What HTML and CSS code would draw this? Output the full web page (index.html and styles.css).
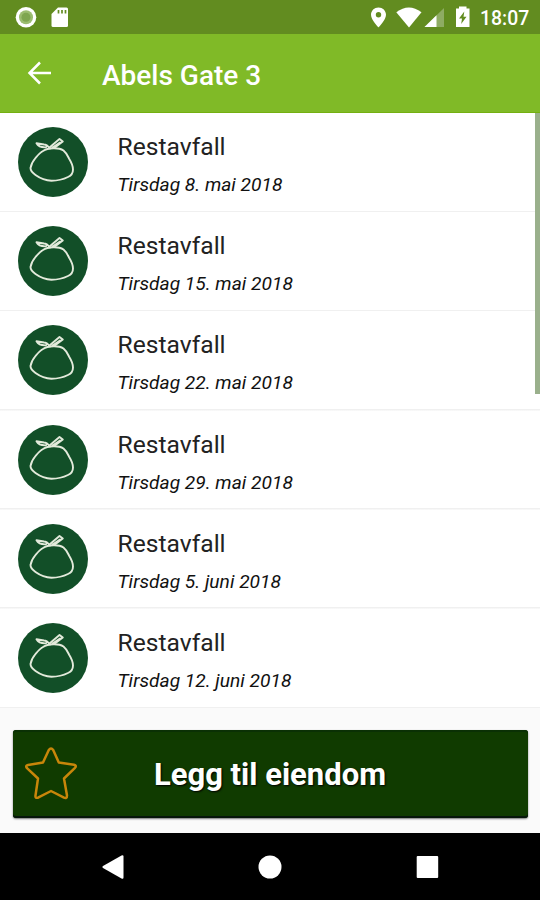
FILE: index.html
```html
<!DOCTYPE html>
<html lang="no">
<head>
<meta charset="utf-8">
<title>Abels Gate 3</title>
<link rel="stylesheet" href="styles.css">
</head>
<body>
<!-- waste bag, used by every row -->
<svg class="defs">
	<symbol id="bag" viewBox="0 0 70 70">
		<circle cx="35" cy="35" r="35" fill="#124f28"/>
		<g fill="none" stroke="#e3eadb" stroke-width="1.9" stroke-linejoin="round" stroke-linecap="round">
			<path d="M25 24C30 20.500 41 20.500 45.500 23.500C48.500 26 49.500 28.500 51 31.500C53.500 35.500 55 39 55 42.500C55 46.500 53.500 48.500 50 50C45 52.500 39 53.700 33.500 53.700C27 53.500 21 50.500 17.500 48C14 45.500 12.500 44 12.500 41C13 37.500 15 34 17.500 31C20 28 22 25.500 25 24Z"/>
			<path d="M32 21.500C30 19 28 17.500 26 17.500L18.500 16.300C20 19 24 20.500 28 20.300"/>
			<path d="M31.500 20.500L41.500 12L44.800 14.500L36.500 20.800M34.500 20.500L42 15.500"/>
		</g>
	</symbol>
</svg>
<div class="screen">
	<div class="status">
		<svg class="notifications" width="60" height="34" viewBox="0 0 60 34">
			<circle cx="16" cy="17.300" r="10.300" fill="#fff"/>
			<circle cx="16" cy="17.300" r="7" fill="#9bbd70"/>
			<circle cx="16" cy="17.300" r="4.500" fill="#7ea650"/>
			<path d="M48 7.500H56.500Q58 7.500 58 9V25.500Q58 27 56.500 27H43Q41.500 27 41.500 25.500V14Z" fill="#fff"/>
			<path d="M48.500 10v3.500M52 10v3.500M55.500 10v3.500" stroke="#628c20" stroke-width="1.700"/>
		</svg>
		<svg class="system" width="102" height="34" viewBox="0 0 102 34">
			<path fill="#fff" fill-rule="evenodd" d="M8.500 7.500C4.300 7.500 1 10.700 1 14.800C1 20 8.500 27.500 8.500 27.500S16 20 16 14.800C16 10.700 12.700 7.500 8.500 7.500ZM8.500 12A2.700 2.700 0 1 1 8.500 17.400A2.700 2.700 0 1 1 8.500 12Z"/>
			<path fill="#fff" d="M26.300 12.300Q38.800 2.800 51.500 12.300L39 27.500Z"/>
			<path fill="#8eac63" d="M74 8V27H54.500Z"/>
			<path fill="#fff" d="M66.500 15.300V27H54.500Z"/>
			<path fill="#fff" d="M89 8.500V6.500H96.500V8.500H99.500V27H86V8.500Z"/>
			<path fill="#628c20" d="M94.300 11.500L89 18.500H92L91.200 24L96.500 16.700H93.500Z"/>
		</svg>
		<span class="clock">18:07</span>
	</div>
	<div class="toolbar">
		<svg class="back" width="26" height="24" viewBox="0 0 26 24">
			<path d="M24 12H2.500M13 1.500L2.500 12L13 22.500" fill="none" stroke="#fff" stroke-width="2.500"/>
		</svg>
		<h1 class="title">Abels Gate 3</h1>
	</div>
	<div class="list">
		<div class="row">
			<svg class="icon"><use href="#bag"/></svg>
			<div class="text"><div class="name">Restavfall</div><div class="date">Tirsdag 8. mai 2018</div></div>
		</div>
		<div class="row">
			<svg class="icon"><use href="#bag"/></svg>
			<div class="text"><div class="name">Restavfall</div><div class="date">Tirsdag 15. mai 2018</div></div>
		</div>
		<div class="row">
			<svg class="icon"><use href="#bag"/></svg>
			<div class="text"><div class="name">Restavfall</div><div class="date">Tirsdag 22. mai 2018</div></div>
		</div>
		<div class="row">
			<svg class="icon"><use href="#bag"/></svg>
			<div class="text"><div class="name">Restavfall</div><div class="date">Tirsdag 29. mai 2018</div></div>
		</div>
		<div class="row">
			<svg class="icon"><use href="#bag"/></svg>
			<div class="text"><div class="name">Restavfall</div><div class="date">Tirsdag 5. juni 2018</div></div>
		</div>
		<div class="row">
			<svg class="icon"><use href="#bag"/></svg>
			<div class="text"><div class="name">Restavfall</div><div class="date">Tirsdag 12. juni 2018</div></div>
		</div>
		<div class="scrollbar"></div>
	</div>
	<div class="footer">
		<button class="add">
			<svg class="star" width="54" height="54" viewBox="0 0 54 54">
				<path d="M24.800 4Q27 .8 29.200 4L34.800 16.500L50 18.700Q53 19.500 51 21.800L40 32.500L43 49.500Q43 53 40 51.700L27 45L14 51.700Q11 52.500 11.500 49.500L14 32.500L3 22.200Q1 19.700 4 19L19 16.500Z" fill="none" stroke="#c8860a" stroke-width="2.500" stroke-linejoin="round"/>
			</svg>
			<span class="label">Legg til eiendom</span>
		</button>
	</div>
	<div class="navbar">
		<svg width="24" height="26" viewBox="0 0 24 26"><path d="M20.500 1.500Q22.500 .5 22.500 2.500V23.500Q22.500 25.500 20.500 24.500L2 14Q.5 13 2 12Z" fill="#fff"/></svg>
		<svg width="24" height="26" viewBox="0 0 24 26"><circle cx="12" cy="13" r="11.500" fill="#fff"/></svg>
		<svg width="24" height="26" viewBox="0 0 24 26"><rect x="1.700" y="2" width="21.500" height="22" rx="1" fill="#fff"/></svg>
	</div>
</div>
</body>
</html>
```
FILE: styles.css
```css
body{
	margin:0;
	font-family:Roboto, "Liberation Sans", sans-serif;
	background:#fafafa;
}
.defs{
	display:none;
}
.screen{
	display:flex;
	flex-direction:column;
	width:540px;
	height:900px;
	overflow:hidden;
}
.status{
	display:flex;
	align-items:center;
	height:34px;
	box-sizing:border-box;
	padding:0 11px 0 10px;
	background:#628c20;
}
.system{
	margin-left:auto;
	margin-right:8px;
}
.clock{
	width:49px;
	color:#fff;
	font-size:19.4px;
	font-weight:500;
	line-height:34px;
	padding-top:3px;
	white-space:nowrap;
}
.toolbar{
	display:flex;
	align-items:center;
	height:79px;
	box-sizing:border-box;
	padding:0 0 0 27px;
	background:#80ba27;
	border-bottom:1px solid #74b010;
}
.back{
	margin-right:49px;
}
.title{
	margin:5px 0 0;
	color:#fff;
	font-size:28px;
	font-weight:500;
	line-height:32px;
}
.list{
	position:relative;
	background:#fff;
}
.row{
	display:flex;
	height:99.2px;
	box-sizing:border-box;
	padding:14px 0 0 17.5px;
	background:linear-gradient(#f0f0f0, #f0f0f0) 0 100% / 100% 1.5px no-repeat;
}
.icon{
	width:70px;
	height:70px;
	margin-right:30px;
}
.name{
	margin-top:4px;
	color:#222;
	font-size:24.6px;
	line-height:31px;
}
.date{
	margin-top:10px;
	color:#111;
	font-size:19.2px;
	font-style:italic;
	line-height:25px;
}
/* lies over the rows */
.scrollbar{
	position:absolute;
	top:0;
	right:0;
	width:5px;
	height:281px;
	background:#9ab08c;
}
.footer{
	flex:1;
	padding:22px 12px 0 13px;
}
.add{
	display:flex;
	align-items:center;
	width:100%;
	height:88px;
	padding:0 66px 0 11px;
	border:0;
	border-radius:3px;
	background:#103b00;
	box-shadow:inset 0 2px 0 #0a3004, inset 0 -2px 0 #06160a, 0 1px 2px #777;
	font-family:inherit;
}
.star{
	flex:none;
	margin-bottom:3px;
}
.label{
	flex:1;
	padding-top:2px;
	color:#fff;
	font-size:31px;
	font-weight:700;
	line-height:36px;
	text-align:center;
	white-space:nowrap;
	text-shadow:1px 1px 2px #000;
}
.navbar{
	display:flex;
	align-items:center;
	justify-content:space-between;
	height:67px;
	box-sizing:border-box;
	padding:0 101px;
	background:#000;
}
```
